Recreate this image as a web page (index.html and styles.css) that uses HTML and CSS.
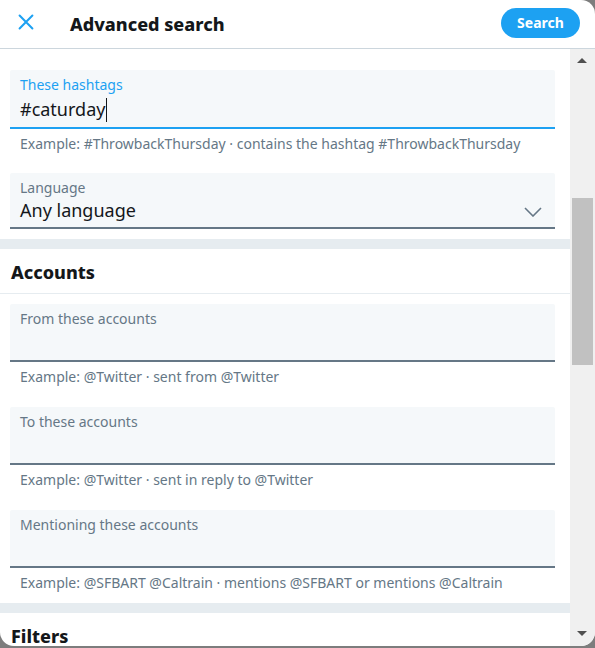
FILE: index.html
```html
<!DOCTYPE html>
<html lang="en">
<head>
<meta charset="utf-8">
<title>Advanced search</title>
<link rel="stylesheet" href="styles.css">
</head>
<body>
<div class="modal">
  <header class="header">
    <button class="close" aria-label="Close">
      <svg viewBox="0 0 24 24" width="22" height="22"><path d="M5 5 L19 19 M19 5 L5 19" stroke="#1da1f2" stroke-width="2.2" fill="none" stroke-linecap="round"/></svg>
    </button>
    <h1 class="title">Advanced search</h1>
    <button class="search-btn">Search</button>
  </header>
  <div class="body">
    <div class="content">
      <div class="group first">
        <div class="field active">
          <div class="label">These hashtags</div>
          <div class="value">#caturday<span class="caret"></span></div>
        </div>
        <div class="hint">Example: #ThrowbackThursday · contains the hashtag #ThrowbackThursday</div>
      </div>
      <div class="group lang">
        <div class="field select">
          <div class="label">Language</div>
          <div class="value sel">Any language</div>
          <svg class="chev" viewBox="0 0 18 10" width="18" height="10"><path d="M1 1 L9 9 L17 1" stroke="#657786" stroke-width="1.6" fill="none"/></svg>
        </div>
      </div>
      <div class="band"></div>
      <h2 class="section-title">Accounts</h2>
      <div class="group after-title">
        <div class="field">
          <div class="label">From these accounts</div>
          <div class="value"></div>
        </div>
        <div class="hint">Example: @Twitter · sent from @Twitter</div>
      </div>
      <div class="group">
        <div class="field">
          <div class="label">To these accounts</div>
          <div class="value"></div>
        </div>
        <div class="hint">Example: @Twitter · sent in reply to @Twitter</div>
      </div>
      <div class="group">
        <div class="field">
          <div class="label">Mentioning these accounts</div>
          <div class="value"></div>
        </div>
        <div class="hint">Example: @SFBART @Caltrain · mentions @SFBART or mentions @Caltrain</div>
      </div>
      <div class="band"></div>
      <h2 class="section-title">Filters</h2>
    </div>
    <div class="scrollbar">
      <div class="arrow up"></div>
      <div class="track"><div class="thumb"></div></div>
      <div class="arrow down"></div>
    </div>
  </div>
</div>
</body>
</html>
```
FILE: styles.css
```css
* { box-sizing: border-box; }
html, body { margin: 0; padding: 0; }
body {
  width: 595px;
  height: 648px;
  overflow: hidden;
  background: #7d7d7d;
  font-family: "Noto Sans", "Open Sans", sans-serif;
  color: #14171a;
}
.modal {
  width: 595px;
  height: 646px;
  background: #fff;
  border-radius: 0 14px 14px 14px;
  overflow: hidden;
  display: flex;
  flex-direction: column;
}
.header {
  height: 49px;
  flex: none;
  display: flex;
  align-items: center;
  border-bottom: 1px solid #ccd6dd;
  padding: 0 15px 0 14px;
}
.close {
  width: 24px;
  height: 24px;
  border: 0;
  background: none;
  padding: 0;
  margin-right: 32px;
  display: flex;
  align-items: center;
  justify-content: center;
  margin-top: -4px;
}
.title {
  margin: 0;
  font-size: 18px;
  font-weight: 800;
  flex: 1;
  margin-top: -1px;
}
.search-btn {
  height: 30px;
  width: 79px;
  border: 0;
  border-radius: 15px;
  background: #1da1f2;
  color: #fff;
  font-family: inherit;
  font-weight: 700;
  font-size: 14px;
  padding: 0;
  margin-top: -3px;
}
.body {
  flex: 1;
  display: flex;
  min-height: 0;
}
.content {
  width: 570px;
  flex: none;
  overflow: hidden;
}
.group { padding: 0 15px 0 10px; margin-top: 20px; }
.group.first { margin-top: 21px; }
.group.lang { margin-top: 19px; }
.group.after-title { margin-top: 10px; }
.field {
  position: relative;
  background: #f5f8fa;
  border-bottom: 2px solid #657786;
  padding: 5px 10px 5px;
  border-radius: 2px 2px 0 0;
}
.field.active { border-bottom-color: #1da1f2; }
.label {
  font-size: 14px;
  line-height: 20px;
  color: #657786;
}
.field.active .label { color: #1da1f2; }
.value {
  font-size: 18px;
  line-height: 26px;
  height: 26px;
  color: #14171a;
}
.field.active .value { line-height: 28px; height: 27px; }
.value.sel { line-height: 25px; height: 25px; }
.field.select { padding-bottom: 4px; }
.caret {
  display: inline-block;
  width: 1px;
  height: 24px;
  background: #14171a;
  vertical-align: -6px;
  margin-left: 1px;
}
.chev {
  position: absolute;
  right: 13px;
  bottom: 10px;
}
.hint {
  font-size: 14px;
  line-height: 20px;
  padding: 5px 10px 0;
  color: #657786;
}
.band {
  height: 10px;
  background: #e6ecf0;
  margin-top: 10px;
}
.section-title {
  margin: 0;
  height: 45px;
  padding: 11px 11px 0;
  font-size: 18px;
  font-weight: 800;
  border-bottom: 1px solid #e6ecf0;
}
.scrollbar {
  width: 25px;
  flex: none;
  background: #f0f0f0;
  display: flex;
  flex-direction: column;
}
.arrow {
  height: 17px;
  flex: none;
  position: relative;
}
.arrow.up::after, .arrow.down::after {
  content: "";
  position: absolute;
  left: 7px;
  border-left: 5px solid transparent;
  border-right: 5px solid transparent;
}
.arrow.up::after { top: 9px; border-bottom: 5px solid #505050; }
.arrow.down::after { top: 2px; border-top: 5px solid #505050; }
.track {
  flex: 1;
  padding: 132px 2px 0;
}
.thumb {
  height: 167px;
  background: #c1c1c1;
}
```
